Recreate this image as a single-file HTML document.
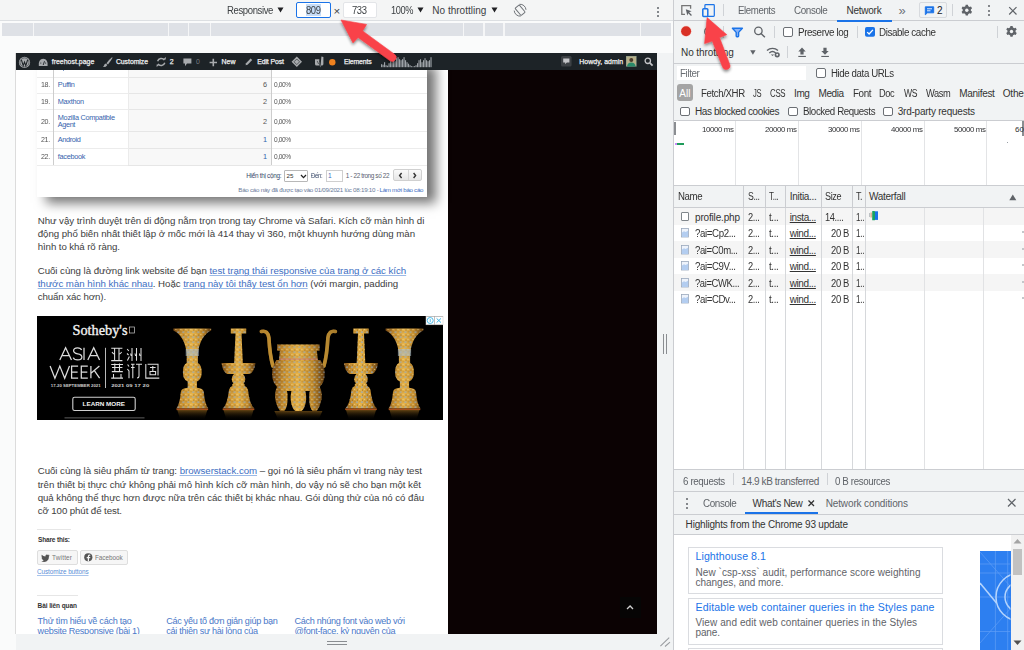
<!DOCTYPE html><html><head><meta charset="utf-8"><style>
*{margin:0;padding:0;box-sizing:border-box}
html,body{width:1024px;height:650px;overflow:hidden;background:#fff;font-family:"Liberation Sans",sans-serif}
.a{position:absolute}
.t{position:absolute;white-space:nowrap;line-height:1}
.sep{position:absolute;width:1px;background:#cfd2d6}
.cb{position:absolute;width:10px;height:10px;border:1.2px solid #6b6f74;border-radius:2px;background:#fff}
svg{position:absolute;overflow:visible}
</style></head><body>
<div class="a" style="left:0px;top:0px;width:673px;height:650px;background:#fafbfb"></div>
<div class="a" style="left:0px;top:0px;width:673px;height:20px;background:#f4f5f5"></div>
<div class="a" style="left:0px;top:20px;width:673px;height:1px;background:#dcdfe2"></div>
<svg style="left:277px;top:7px;" width="7" height="6" viewBox="0 0 7 6"><path d="M0.5 0.5H6.5L3.5 5.5Z" fill="#202124"/></svg>
<div class="a" style="left:296px;top:2px;width:35px;height:16px;background:#fff;border:1px solid #1a73e8;border-radius:2px"></div>
<div class="a" style="left:305.5px;top:4px;width:15.5px;height:12px;background:#c6dcf7"></div>
<div class="a" style="left:343px;top:2px;width:34px;height:16px;background:#fff;border:1px solid #e3e5e8;border-radius:2px"></div>
<svg style="left:416.5px;top:7px;" width="7" height="6" viewBox="0 0 7 6"><path d="M0.5 0.5H6.5L3.5 5.5Z" fill="#202124"/></svg>
<svg style="left:490.5px;top:7px;" width="7" height="6" viewBox="0 0 7 6"><path d="M0.5 0.5H6.5L3.5 5.5Z" fill="#202124"/></svg>
<svg style="left:510px;top:0px;" width="20" height="20" viewBox="0 0 20 20"><g transform="translate(10.1,10.2)" fill="none" stroke="#6f7378" stroke-width="1"><rect x="-2.7" y="-4.7" width="5.4" height="9.4" rx="0.7" transform="rotate(-40)"/><path d="M-0.6 -5.9A5.9 5.9 0 0 1 5.9 -0.4"/><path d="M0.6 5.9A5.9 5.9 0 0 1 -5.9 0.4"/></g></svg>
<div class="a" style="left:657px;top:6.5px;width:2.2px;height:2.2px;background:#5f6368;border-radius:50%"></div>
<div class="a" style="left:657px;top:10.5px;width:2.2px;height:2.2px;background:#5f6368;border-radius:50%"></div>
<div class="a" style="left:657px;top:14.5px;width:2.2px;height:2.2px;background:#5f6368;border-radius:50%"></div>
<div class="a" style="left:2px;top:23px;width:669px;height:13px;background:#dee1e6"></div>
<div class="a" style="left:32.6px;top:23px;width:1.2px;height:13px;background:#f5f6f7"></div>
<div class="a" style="left:168px;top:23px;width:1.2px;height:13px;background:#f5f6f7"></div>
<div class="a" style="left:188px;top:23px;width:1.2px;height:13px;background:#f5f6f7"></div>
<div class="a" style="left:210px;top:23px;width:1.2px;height:13px;background:#f5f6f7"></div>
<div class="a" style="left:462.6px;top:23px;width:1.2px;height:13px;background:#f5f6f7"></div>
<div class="a" style="left:483.4px;top:23px;width:1.2px;height:13px;background:#f5f6f7"></div>
<div class="a" style="left:503.4px;top:23px;width:1.2px;height:13px;background:#f5f6f7"></div>
<div class="a" style="left:640.3px;top:23px;width:1.2px;height:13px;background:#f5f6f7"></div>
<div class="t" style="left:226.70px;top:6.23px;font-size:10px;color:#3c4043;letter-spacing:-0.400px;transform:scaleX(0.954);transform-origin:0 0;">Responsive</div>
<div class="t" style="left:306.00px;top:6.23px;font-size:10px;color:#3c4043;letter-spacing:-0.400px;transform:scaleX(0.944);transform-origin:0 0;">809</div>
<div class="t" style="left:333.40px;top:6.47px;font-size:11.5px;color:#3c4043;">×</div>
<div class="t" style="left:351.60px;top:6.23px;font-size:10px;color:#3c4043;letter-spacing:-0.400px;transform:scaleX(0.944);transform-origin:0 0;">733</div>
<div class="t" style="left:390.70px;top:6.23px;font-size:10px;color:#3c4043;letter-spacing:-0.400px;transform:scaleX(0.919);transform-origin:0 0;">100%</div>
<div class="t" style="left:432.30px;top:6.23px;font-size:10px;color:#3c4043;letter-spacing:0.015px;">No throttling</div>
<div class="a" style="left:15px;top:53px;width:1px;height:581px;background:#dcdcdc"></div>
<div class="a" style="left:16px;top:53px;width:641px;height:581px;background:#ffffff"></div>
<div class="a" style="left:448px;top:70px;width:209px;height:564px;background:#0b0203"></div>
<div class="a" style="left:37px;top:60px;width:390px;height:137px;background:#fff;box-shadow:9px 6px 11px rgba(0,0,0,0.55)"></div>
<div class="a" style="left:428px;top:60px;width:20px;height:150px;background:transparent"></div>
<div class="a" style="left:37px;top:76.5px;width:390px;height:1px;background:#ececec"></div>
<div class="a" style="left:37px;top:93.2px;width:390px;height:1px;background:#ececec"></div>
<div class="a" style="left:37px;top:109.4px;width:390px;height:1px;background:#ececec"></div>
<div class="a" style="left:37px;top:131.4px;width:390px;height:1px;background:#ececec"></div>
<div class="a" style="left:37px;top:148px;width:390px;height:1px;background:#ececec"></div>
<div class="a" style="left:37px;top:164.7px;width:390px;height:1px;background:#ececec"></div>
<div class="a" style="left:128px;top:70px;width:143px;height:95px;background:#f8f8f8"></div>
<div class="a" style="left:128px;top:76.5px;width:143px;height:1px;background:#e6e6e6"></div>
<div class="a" style="left:128px;top:93.2px;width:143px;height:1px;background:#e6e6e6"></div>
<div class="a" style="left:128px;top:109.4px;width:143px;height:1px;background:#e6e6e6"></div>
<div class="a" style="left:128px;top:131.4px;width:143px;height:1px;background:#e6e6e6"></div>
<div class="a" style="left:128px;top:148px;width:143px;height:1px;background:#e6e6e6"></div>
<div class="a" style="left:128px;top:164.7px;width:143px;height:1px;background:#e6e6e6"></div>
<div class="a" style="left:53.3px;top:70px;width:1px;height:95px;background:#cdcdcd"></div>
<div class="a" style="left:127.8px;top:70px;width:1px;height:95px;background:#ebebeb"></div>
<div class="a" style="left:271px;top:70px;width:1px;height:95px;background:#cdcdcd"></div>
<div class="a" style="left:284px;top:169.5px;width:24.4px;height:12.1px;background:#fff;border:1px solid #b8b8b8;border-radius:1px"></div>
<svg style="left:300px;top:173.5px;" width="7" height="5" viewBox="0 0 7 5"><path d="M1 1L3.5 3.6L6 1" fill="none" stroke="#222" stroke-width="1.3"/></svg>
<div class="a" style="left:325.5px;top:169.5px;width:17.5px;height:12.1px;background:#fff;border:1px solid #cfcfcf"></div>
<div class="a" style="left:393.2px;top:169px;width:28.5px;height:11.5px;background:linear-gradient(#fafafa,#e6e6e6);border:1px solid #d0d0d0;border-radius:2px"></div>
<div class="a" style="left:407.5px;top:169.5px;width:1px;height:10.5px;background:#d6d6d6"></div>
<svg style="left:398px;top:171.5px;" width="20" height="7" viewBox="0 0 20 7"><path d="M3.6 1L1.6 3.5L3.6 6M15.6 1L17.6 3.5L15.6 6" fill="none" stroke="#333" stroke-width="1.4"/></svg>
<div class="t" style="left:40.50px;top:63.32px;font-size:7.3px;color:#555555;letter-spacing:-0.400px;transform:scaleX(0.974);transform-origin:0 0;">17.</div>
<div class="t" style="left:57.80px;top:63.32px;font-size:7.3px;color:#3563ad;letter-spacing:-0.400px;transform:scaleX(0.921);transform-origin:0 0;">Opera</div>
<div class="t" style="left:263.00px;top:63.32px;font-size:7.3px;color:#555555;">3</div>
<div class="t" style="left:273.70px;top:63.32px;font-size:7.3px;color:#555555;letter-spacing:-0.400px;transform:scaleX(0.901);transform-origin:0 0;">0,00%</div>
<div class="t" style="left:40.50px;top:81.32px;font-size:7.3px;color:#555555;letter-spacing:-0.400px;transform:scaleX(0.974);transform-origin:0 0;">18.</div>
<div class="t" style="left:57.80px;top:81.32px;font-size:7.3px;color:#3563ad;letter-spacing:-0.285px;">Puffin</div>
<div class="t" style="left:263.00px;top:81.32px;font-size:7.3px;color:#555555;">6</div>
<div class="t" style="left:273.70px;top:81.32px;font-size:7.3px;color:#555555;letter-spacing:-0.400px;transform:scaleX(0.901);transform-origin:0 0;">0,00%</div>
<div class="t" style="left:40.50px;top:97.82px;font-size:7.3px;color:#555555;letter-spacing:-0.400px;transform:scaleX(0.974);transform-origin:0 0;">19.</div>
<div class="t" style="left:57.80px;top:97.82px;font-size:7.3px;color:#3563ad;letter-spacing:-0.298px;">Maxthon</div>
<div class="t" style="left:263.00px;top:97.82px;font-size:7.3px;color:#555555;">2</div>
<div class="t" style="left:273.70px;top:97.82px;font-size:7.3px;color:#555555;letter-spacing:-0.400px;transform:scaleX(0.901);transform-origin:0 0;">0,00%</div>
<div class="t" style="left:40.50px;top:136.42px;font-size:7.3px;color:#555555;letter-spacing:-0.400px;transform:scaleX(0.974);transform-origin:0 0;">21.</div>
<div class="t" style="left:57.80px;top:136.42px;font-size:7.3px;color:#3563ad;letter-spacing:-0.375px;">Android</div>
<div class="t" style="left:263.00px;top:136.42px;font-size:7.3px;color:#3563ad;">1</div>
<div class="t" style="left:273.70px;top:136.42px;font-size:7.3px;color:#555555;letter-spacing:-0.400px;transform:scaleX(0.901);transform-origin:0 0;">0,00%</div>
<div class="t" style="left:40.50px;top:153.02px;font-size:7.3px;color:#555555;letter-spacing:-0.400px;transform:scaleX(0.974);transform-origin:0 0;">22.</div>
<div class="t" style="left:57.80px;top:153.02px;font-size:7.3px;color:#3563ad;letter-spacing:-0.288px;">facebook</div>
<div class="t" style="left:263.00px;top:153.02px;font-size:7.3px;color:#3563ad;">1</div>
<div class="t" style="left:273.70px;top:153.02px;font-size:7.3px;color:#555555;letter-spacing:-0.400px;transform:scaleX(0.901);transform-origin:0 0;">0,00%</div>
<div class="t" style="left:40.50px;top:117.82px;font-size:7.3px;color:#555555;letter-spacing:-0.400px;transform:scaleX(0.974);transform-origin:0 0;">20.</div>
<div class="t" style="left:57.80px;top:114.12px;font-size:7.3px;color:#3563ad;letter-spacing:-0.261px;">Mozilla Compatible</div>
<div class="t" style="left:57.80px;top:121.22px;font-size:7.3px;color:#3563ad;letter-spacing:-0.367px;">Agent</div>
<div class="t" style="left:263.00px;top:117.82px;font-size:7.3px;color:#555555;">2</div>
<div class="t" style="left:273.70px;top:117.82px;font-size:7.3px;color:#555555;letter-spacing:-0.400px;transform:scaleX(0.901);transform-origin:0 0;">0,00%</div>
<div class="t" style="left:246.30px;top:172.58px;font-size:6.4px;color:#3a4a6a;letter-spacing:-0.298px;">Hiển thị cộng:</div>
<div class="t" style="left:286.50px;top:172.95px;font-size:6.2px;color:#333;">25</div>
<div class="t" style="left:311.40px;top:172.58px;font-size:6.4px;color:#3a4a6a;letter-spacing:-0.400px;transform:scaleX(0.943);transform-origin:0 0;">Đến:</div>
<div class="t" style="left:328.00px;top:172.61px;font-size:6.6px;color:#3d6ec2;">1</div>
<div class="t" style="left:345.80px;top:172.58px;font-size:6.4px;color:#5a6270;letter-spacing:-0.376px;">1 - 22 trong số 22</div>
<div class="t" style="left:238.30px;top:186.55px;font-size:6.2px;color:#6a7a9a;letter-spacing:-0.249px;">Báo cáo này đã được tạo vào 01/09/2021 lúc 08:19:10 -</div>
<div class="t" style="left:379.50px;top:186.55px;font-size:6.2px;color:#3d6ec2;letter-spacing:-0.291px;">Làm mới báo cáo</div>
<div class="t" style="left:37.70px;top:216.39px;font-size:9.7px;color:#404040;letter-spacing:-0.042px;">Như vậy trình duyệt trên di động nằm trọn trong tay Chrome và Safari. Kích cỡ màn hình di</div>
<div class="t" style="left:37.70px;top:229.39px;font-size:9.7px;color:#404040;letter-spacing:-0.043px;">động phổ biến nhất thiết lập ở mốc mới là 414 thay vì 360, một khuynh hướng dùng màn</div>
<div class="t" style="left:37.70px;top:242.19px;font-size:9.7px;color:#404040;letter-spacing:-0.090px;">hình to khá rõ ràng.</div>
<div class="t" style="left:37.70px;top:266.39px;font-size:9.7px;color:#404040;letter-spacing:-0.040px;">Cuối cùng là đường link website để bạn <span style="color:#3d6ec2;text-decoration:underline;text-decoration-color:#9bb9e6;text-underline-offset:1px">test trạng thái responsive của trang ở các kích</span></div>
<div class="t" style="left:37.70px;top:279.49px;font-size:9.7px;color:#404040;letter-spacing:-0.047px;"><span style="color:#3d6ec2;text-decoration:underline;text-decoration-color:#9bb9e6;text-underline-offset:1px">thước màn hình khác nhau</span>. Hoặc <span style="color:#3d6ec2;text-decoration:underline;text-decoration-color:#9bb9e6;text-underline-offset:1px">trang này tôi thấy test ổn hơn</span> (với margin, padding</div>
<div class="t" style="left:37.70px;top:292.39px;font-size:9.7px;color:#404040;letter-spacing:-0.100px;">chuẩn xác hơn).</div>
<div class="t" style="left:37.70px;top:466.49px;font-size:9.7px;color:#404040;letter-spacing:-0.040px;">Cuối cùng là siêu phẩm từ trang: <span style="color:#3d6ec2;text-decoration:underline;text-decoration-color:#9bb9e6;text-underline-offset:1px">browserstack.com</span> – gọi nó là siêu phẩm vì trang này test</div>
<div class="t" style="left:37.70px;top:479.59px;font-size:9.7px;color:#404040;letter-spacing:-0.038px;">trên thiết bị thực chứ không phải mô hình kích cỡ màn hình, do vậy nó sẽ cho bạn một kết</div>
<div class="t" style="left:37.70px;top:492.89px;font-size:9.7px;color:#404040;letter-spacing:-0.045px;">quả không thể thực hơn được nữa trên các thiết bị khác nhau. Gói dùng thử của nó có đâu</div>
<div class="t" style="left:37.70px;top:505.99px;font-size:9.7px;color:#404040;letter-spacing:-0.093px;">cỡ 100 phút để test.</div>
<div class="a" style="left:37px;top:529px;width:33.5px;height:1px;background:#e6e6e6"></div>
<div class="a" style="left:37px;top:550.2px;width:40.7px;height:14.4px;background:#f6f6f6;border:1px solid #dedede;border-radius:2px"></div>
<svg style="left:41px;top:553.5px;" width="9" height="8" viewBox="0 0 9 8"><path d="M8.6 1.2Q8 1.6 7.6 1.6Q8 1.2 8.2 0.6Q7.6 1 7.1 1Q6.5 0.4 5.7 0.5Q4.2 0.8 4.4 2.6Q2.3 2.5 0.7 0.8Q0 2.4 1.2 3.6Q0.8 3.6 0.5 3.4Q0.6 4.8 1.9 5.2Q1.5 5.4 1.1 5.3Q1.6 6.4 2.8 6.5Q1.6 7.4 0.2 7.3Q4.5 9.4 7.2 5.8Q8 4.4 7.9 2.4Q8.4 2 8.6 1.2Z" fill="#555"/></svg>
<div class="a" style="left:80px;top:550.2px;width:47.7px;height:14.4px;background:#f6f6f6;border:1px solid #dedede;border-radius:2px"></div>
<svg style="left:83.5px;top:553px;" width="9" height="9" viewBox="0 0 9 9"><circle cx="4.3" cy="4.3" r="4.1" fill="#555"/><path d="M5 8.4V5.3H6.1L6.3 4.1H5V3.3Q5 2.8 5.6 2.8H6.3V1.7Q5.8 1.6 5.3 1.6Q3.8 1.7 3.8 3.2V4.1H2.7V5.3H3.8V8.4Z" fill="#f6f6f6"/></svg>
<div class="a" style="left:37px;top:594.5px;width:40.6px;height:1.5px;background:#e6e6e6"></div>
<div class="t" style="left:38.00px;top:536.60px;font-size:6.5px;color:#333;font-weight:bold;letter-spacing:-0.159px;">Share this:</div>
<div class="t" style="left:52.00px;top:554.78px;font-size:6.4px;color:#777;letter-spacing:0.197px;">Twitter</div>
<div class="t" style="left:94.90px;top:554.78px;font-size:6.4px;color:#777;letter-spacing:-0.024px;">Facebook</div>
<div class="t" style="left:37.00px;top:569.08px;font-size:6.4px;color:#5b8fd6;letter-spacing:-0.083px;text-decoration:underline;text-decoration-color:#a8c4ec">Customize buttons</div>
<div class="t" style="left:37.60px;top:603.10px;font-size:6.5px;color:#333;font-weight:bold;letter-spacing:-0.096px;">Bài liên quan</div>
<div class="t" style="left:37.60px;top:617.00px;font-size:9.1px;color:#4a78c8;letter-spacing:-0.279px;">Thử tìm hiểu về cách tạo</div>
<div class="t" style="left:37.60px;top:626.80px;font-size:9.1px;color:#4a78c8;letter-spacing:-0.275px;">website Responsive (bài 1)</div>
<div class="t" style="left:166.20px;top:617.00px;font-size:9.1px;color:#4a78c8;letter-spacing:-0.282px;">Các yếu tố đơn giản giúp bạn</div>
<div class="t" style="left:166.20px;top:626.80px;font-size:9.1px;color:#4a78c8;letter-spacing:-0.283px;">cải thiện sự hài lòng của</div>
<div class="t" style="left:294.50px;top:617.00px;font-size:9.1px;color:#4a78c8;letter-spacing:-0.296px;">Cách nhúng font vào web với</div>
<div class="t" style="left:294.50px;top:626.80px;font-size:9.1px;color:#4a78c8;letter-spacing:-0.301px;">@font-face, kỷ nguyên của</div>
<div class="a" style="left:620.2px;top:597.3px;width:20.6px;height:20.3px;background:#060505"></div>
<svg style="left:620.2px;top:597.3px;" width="20.6" height="20.3" viewBox="0 0 20.6 20.3"><path d="M7 12L10.1 9L13 12" fill="none" stroke="#cfcfcf" stroke-width="1.3"/></svg>
<svg style="left:37px;top:316px;" width="406" height="104" viewBox="0 0 406 104">
<defs>
<linearGradient id="gold" x1="0" y1="0" x2="1" y2="0">
<stop offset="0" stop-color="#7a4a14"/><stop offset="0.22" stop-color="#c99233"/><stop offset="0.5" stop-color="#e6b34a"/><stop offset="0.78" stop-color="#c08a2e"/><stop offset="1" stop-color="#5e3a10"/></linearGradient>
<linearGradient id="refl" x1="0" y1="0" x2="0" y2="1"><stop offset="0" stop-color="#7a5418" stop-opacity="0.75"/><stop offset="1" stop-color="#000" stop-opacity="0"/></linearGradient>
<pattern id="tex" width="5" height="5" patternUnits="userSpaceOnUse">
<circle cx="1" cy="1.2" r="0.85" fill="#86a9d0" opacity="0.75"/><circle cx="3.6" cy="3.4" r="0.7" fill="#f3dc9a" opacity="0.6"/><circle cx="1.4" cy="4" r="0.55" fill="#3a2208" opacity="0.6"/><circle cx="4" cy="0.8" r="0.5" fill="#4a2c0a" opacity="0.5"/>
</pattern>
</defs>
<rect x="0" y="0" width="406" height="104" fill="#000"/>
<g transform="translate(155.3,0)"><path d="M-18.9 12.5H18.9V14.5Q7.5 20 5.6 37.8V47Q9.4 49 9.4 56.2Q9.4 63.5 4.6 65.5V71.7Q11 72 11.5 76Q12.5 88 16 92.5H-16Q-12.5 88 -11.5 76Q-11 72 -4.6 71.7V65.5Q-9.4 63.5 -9.4 56.2Q-9.4 49 -5.6 47V37.8Q-7.5 20 -18.9 14.5Z" fill="url(#gold)"/><path d="M-18.9 12.5H18.9V14.5Q7.5 20 5.6 37.8V47Q9.4 49 9.4 56.2Q9.4 63.5 4.6 65.5V71.7Q11 72 11.5 76Q12.5 88 16 92.5H-16Q-12.5 88 -11.5 76Q-11 72 -4.6 71.7V65.5Q-9.4 63.5 -9.4 56.2Q-9.4 49 -5.6 47V37.8Q-7.5 20 -18.9 14.5Z" fill="url(#tex)"/>
<rect x="-6.6" y="33" width="13.2" height="7" fill="#a8bccc" opacity="0.6"/>
<rect x="-15.8" y="92.5" width="31.6" height="1.6" fill="#a8501c"/>
<path d="M-15 94.1H15L12 104H-12Z" fill="url(#refl)"/></g>
<g transform="translate(201.5,0)"><path d="M-7.7 12.5H7.7V17.6H3L4.3 47H17Q16 56 11 58H4.5Q6.8 60 6.8 63Q6.8 66 5 67Q6.8 68.5 6.2 70Q8.5 70.5 9.5 74Q11 88 15.8 92.5H-15.8Q-11 88 -9.5 74Q-8.5 70.5 -6.2 70Q-6.8 68.5 -5 67Q-6.8 66 -6.8 63Q-6.8 60 -4.5 58H-11Q-16 56 -17 47H-4.3L-3 17.6H-7.7Z" fill="url(#gold)"/><path d="M-7.7 12.5H7.7V17.6H3L4.3 47H17Q16 56 11 58H4.5Q6.8 60 6.8 63Q6.8 66 5 67Q6.8 68.5 6.2 70Q8.5 70.5 9.5 74Q11 88 15.8 92.5H-15.8Q-11 88 -9.5 74Q-8.5 70.5 -6.2 70Q-6.8 68.5 -5 67Q-6.8 66 -6.8 63Q-6.8 60 -4.5 58H-11Q-16 56 -17 47H-4.3L-3 17.6H-7.7Z" fill="url(#tex)"/>
<rect x="-15.8" y="92.5" width="31.6" height="1.6" fill="#a8501c"/>
<path d="M-15 94.1H15L12 104H-12Z" fill="url(#refl)"/></g>
<g transform="translate(261.4,0)">
<path d="M-37 15.5Q-30.5 14 -29.5 22Q-28.5 40 -25.5 50M37 15.5Q30.5 14 29.5 22Q28.5 40 25.5 50" fill="none" stroke="url(#gold)" stroke-width="3.6" stroke-linecap="round"/>
<path d="M-37 15.5Q-30.5 14 -29.5 22Q-28.5 40 -25.5 50M37 15.5Q30.5 14 29.5 22Q28.5 40 25.5 50" fill="none" stroke="#c89838" stroke-width="3.6" stroke-linecap="round" opacity="0.7"/>
<path d="M-21.2 28.6H21.2V34.8H18.5L19.5 44H22Q27.5 52 26 62Q24 73 12 75H-12Q-24 73 -26 62Q-27.5 52 -22 44H-19.5L-18.5 34.8H-21.2Z M-21 70H-12.5Q-10 78 -11 86Q-11.5 92 -14 94.8H-18.5Q-21 92 -22.5 86Q-25 78 -21 70Z M-6 72H6Q9 80 7 88Q5.5 93.5 3 95H-3Q-5.5 93.5 -7 88Q-9 80 -6 72Z M12.5 70H21Q25 78 22.5 86Q21 92 18.5 94.8H14Q11.5 92 11 86Q10 78 12.5 70Z" fill="url(#gold)"/><path d="M-21.2 28.6H21.2V34.8H18.5L19.5 44H22Q27.5 52 26 62Q24 73 12 75H-12Q-24 73 -26 62Q-27.5 52 -22 44H-19.5L-18.5 34.8H-21.2Z M-21 70H-12.5Q-10 78 -11 86Q-11.5 92 -14 94.8H-18.5Q-21 92 -22.5 86Q-25 78 -21 70Z M-6 72H6Q9 80 7 88Q5.5 93.5 3 95H-3Q-5.5 93.5 -7 88Q-9 80 -6 72Z M12.5 70H21Q25 78 22.5 86Q21 92 18.5 94.8H14Q11.5 92 11 86Q10 78 12.5 70Z" fill="url(#tex)"/>
<rect x="-19" y="42.5" width="38" height="1.2" fill="#c07080" opacity="0.7"/>
<path d="M-24 95H24L20 104H-20Z" fill="url(#refl)"/>
</g>
<g transform="translate(324,0)"><path d="M-7.7 12.5H7.7V17.6H3L4.3 47H17Q16 56 11 58H4.5Q6.8 60 6.8 63Q6.8 66 5 67Q6.8 68.5 6.2 70Q8.5 70.5 9.5 74Q11 88 15.8 92.5H-15.8Q-11 88 -9.5 74Q-8.5 70.5 -6.2 70Q-6.8 68.5 -5 67Q-6.8 66 -6.8 63Q-6.8 60 -4.5 58H-11Q-16 56 -17 47H-4.3L-3 17.6H-7.7Z" fill="url(#gold)"/><path d="M-7.7 12.5H7.7V17.6H3L4.3 47H17Q16 56 11 58H4.5Q6.8 60 6.8 63Q6.8 66 5 67Q6.8 68.5 6.2 70Q8.5 70.5 9.5 74Q11 88 15.8 92.5H-15.8Q-11 88 -9.5 74Q-8.5 70.5 -6.2 70Q-6.8 68.5 -5 67Q-6.8 66 -6.8 63Q-6.8 60 -4.5 58H-11Q-16 56 -17 47H-4.3L-3 17.6H-7.7Z" fill="url(#tex)"/>
<rect x="-15.8" y="92.5" width="31.6" height="1.6" fill="#a8501c"/>
<path d="M-15 94.1H15L12 104H-12Z" fill="url(#refl)"/></g>
<g transform="translate(367.5,0)"><path d="M-18.9 12.5H18.9V14.5Q7.5 20 5.6 37.8V47Q9.4 49 9.4 56.2Q9.4 63.5 4.6 65.5V71.7Q11 72 11.5 76Q12.5 88 16 92.5H-16Q-12.5 88 -11.5 76Q-11 72 -4.6 71.7V65.5Q-9.4 63.5 -9.4 56.2Q-9.4 49 -5.6 47V37.8Q-7.5 20 -18.9 14.5Z" fill="url(#gold)"/><path d="M-18.9 12.5H18.9V14.5Q7.5 20 5.6 37.8V47Q9.4 49 9.4 56.2Q9.4 63.5 4.6 65.5V71.7Q11 72 11.5 76Q12.5 88 16 92.5H-16Q-12.5 88 -11.5 76Q-11 72 -4.6 71.7V65.5Q-9.4 63.5 -9.4 56.2Q-9.4 49 -5.6 47V37.8Q-7.5 20 -18.9 14.5Z" fill="url(#tex)"/>
<rect x="-6.6" y="33" width="13.2" height="7" fill="#a8bccc" opacity="0.6"/>
<rect x="-15.8" y="92.5" width="31.6" height="1.6" fill="#a8501c"/>
<path d="M-15 94.1H15L12 104H-12Z" fill="url(#refl)"/></g>
<text x="35.5" y="19" font-family="Liberation Serif" font-size="14.5" fill="#f2f2f2" stroke="#f2f2f2" stroke-width="0.35" textLength="55" lengthAdjust="spacingAndGlyphs">Sotheby's</text>
<rect x="92.5" y="11" width="5" height="6" fill="none" stroke="#ccc" stroke-width="0.7"/>
<g fill="none" stroke="#dcdcdc" stroke-width="1.25" stroke-linejoin="miter">
<path d="M22.8 43.9L28.6 31.8L34.5 43.9M24.8 39.6H32.4"/>
<path d="M44.6 34Q43.8 31.8 40.6 31.8Q36.6 31.8 36.6 34.8Q36.6 37.2 40.6 37.8Q44.9 38.4 44.9 41Q44.9 43.9 40.6 43.9Q37 43.9 36.3 41.6"/>
<path d="M47 31.8V43.9"/>
<path d="M50.8 43.9L56.7 31.8L62.6 43.9M52.8 39.6H60.6"/>
<path d="M13.1 50.1L17.9 62.2L22.8 50.1L27.7 62.2L32.5 50.1"/>
<path d="M41.1 50.1H34.6V62.2H41.1M34.6 56H40.6"/>
<path d="M50.8 50.1H44.3V62.2H50.8M44.3 56H50.3"/>
<path d="M53.9 50.1V62.2M62.4 50.1L54 57.2M57.2 54.4L62.6 62.2"/>
</g>
<rect x="68" y="31.8" width="0.9" height="40.2" fill="#cfcfcf"/>
<g stroke="#dedede" stroke-width="1.05" fill="none">
<path d="M74.2 32.2H85.4M74.2 44.6H85.4M77.6 32.2V44.6M82 32.2V44.6M75 36Q76.5 38.5 77.6 38M84.6 36Q83 38.5 82 38"/>
<path d="M90.2 33L91.8 35M90 37.5L91.6 39M90.4 44.6L92.4 40.5M95 32V45M99.5 32V44.8M104 32V45M93.6 37.5L94.2 40M98 37.5L98.6 40M102.4 37.5L103 40"/>
<path d="M74.2 48.5H86M75 51.5H85.4M77.8 47.5V55M82.5 47.5V55M74.8 55.6H85.8M76.5 58V62M84 58V62M74.2 62.1H86"/>
<path d="M90.6 48.5L92 50.5M90.4 53L92 55V62.3M94 48.2H97.6M94 51.5H97.6M95.8 48V62.3M99 48.2H105M102 48V60Q102 62 100 62"/>
<path d="M108.8 48V62.1H122.3M110.6 48.2H121V59.5M113 51.5H118.6M115.8 50V55.5M113 55.5H118.6V58.8H113Z"/>
</g>
<text x="13.8" y="71.1" font-family="Liberation Sans" font-weight="bold" font-size="3.8" fill="#cfcfcf" textLength="49.8" lengthAdjust="spacingAndGlyphs">17-20 SEPTEMBER 2021</text>
<text x="74.2" y="71.1" font-family="Liberation Sans" font-weight="bold" font-size="3.8" fill="#cfcfcf" textLength="38" lengthAdjust="spacingAndGlyphs">2021 09 17 20</text>
<rect x="35.8" y="81.2" width="62.4" height="13.3" rx="1.8" fill="none" stroke="#d0d0d0" stroke-width="1.1"/>
<text x="45.6" y="89.9" font-family="Liberation Sans" font-weight="bold" font-size="5.8" fill="#f4f4f4" textLength="42.4" lengthAdjust="spacingAndGlyphs">LEARN MORE</text>
<rect x="27.5" y="101" width="80" height="1.6" fill="#3a3a3a"/>
<rect x="389" y="0.3" width="8.5" height="8.5" fill="#fff"/>
<rect x="397.5" y="0.3" width="8.5" height="8.5" fill="#fff"/>
<rect x="389" y="0.3" width="17" height="8.5" fill="none" stroke="#ccc" stroke-width="0.5"/>
<circle cx="393.2" cy="4.5" r="3" fill="none" stroke="#3cb4e6" stroke-width="0.9"/>
<rect x="392.8" y="3" width="0.8" height="3" fill="#3cb4e6"/>
<path d="M399.6 2.4L404 6.6M404 2.4L399.6 6.6" stroke="#3cb4e6" stroke-width="1"/>
</svg>
<div class="a" style="left:16px;top:53px;width:641px;height:17px;background:#1d2327"></div>
<svg style="left:18px;top:56px;" width="14" height="13" viewBox="0 0 14 13"><circle cx="6.5" cy="6.4" r="5.6" fill="#a7aaad"/><circle cx="6.5" cy="6.4" r="4.5" fill="none" stroke="#1d2327" stroke-width="0.5"/><path d="M3.4 3.8L5.2 9.6L6.5 6L7.8 9.6L9.6 3.8" fill="none" stroke="#1d2327" stroke-width="1.1"/></svg>
<svg style="left:38px;top:57.5px;" width="11" height="9" viewBox="0 0 11 9"><path d="M0.8 8Q0.2 1 5.2 0.8Q10.2 1 9.6 8Z" fill="#a7aaad"/><path d="M5.2 7L6.5 3.2" stroke="#1d2327" stroke-width="0.9"/><circle cx="2.8" cy="5" r="0.6" fill="#1d2327"/><circle cx="7.6" cy="5" r="0.6" fill="#1d2327"/></svg>
<svg style="left:102px;top:56px;" width="11" height="12" viewBox="0 0 11 12"><path d="M10 1.2Q7 3.5 4.5 7.2L6 8.4Q8.8 5 10.6 1.8Z" fill="#a7aaad"/><path d="M4.2 7.6Q2.4 7.6 2 9.4Q1.6 10.6 0.8 11Q3.8 11.4 5.2 9.2Z" fill="#a7aaad"/></svg>
<svg style="left:156px;top:57px;" width="11" height="10" viewBox="0 0 11 10"><path d="M1.6 4.2A3.8 3.8 0 0 1 8.4 3.2" fill="none" stroke="#a7aaad" stroke-width="1.5"/><path d="M8.8 5.8A3.8 3.8 0 0 1 2 6.8" fill="none" stroke="#a7aaad" stroke-width="1.5"/><path d="M6.8 2.4H9.8V0Z" fill="#a7aaad"/><path d="M3.6 7.6H0.6V10Z" fill="#a7aaad"/></svg>
<svg style="left:182.5px;top:58px;" width="9" height="9" viewBox="0 0 9 9"><path d="M0.4 0.6H8.4V5.6H4L2 8.2V5.6H0.4Z" fill="#a7aaad"/></svg>
<svg style="left:208.5px;top:57.5px;" width="9" height="9" viewBox="0 0 9 9"><path d="M4.3 0.8V8.2M0.6 4.5H8" stroke="#a7aaad" stroke-width="1.6"/></svg>
<svg style="left:244px;top:57px;" width="9" height="10" viewBox="0 0 9 10"><path d="M1.6 8.2L2 6.2L6.6 1.4L8.2 3L3.6 7.8Z" fill="#a7aaad"/></svg>
<svg style="left:291px;top:56px;" width="12" height="12" viewBox="0 0 12 12"><path d="M5.8 0.5L11 5.8L5.8 11L0.6 5.8Z" fill="#a7aaad"/><path d="M5.8 3L8.6 5.8L5.8 8.6L3 5.8Z" fill="none" stroke="#1d2327" stroke-width="0.6"/></svg>
<svg style="left:313.5px;top:56px;" width="10" height="12" viewBox="0 0 10 12"><path d="M1 3.2H5.4V9.6H2.6Q1 9.6 1 8Z" fill="#a7aaad"/><path d="M7.4 0.6L9.4 1V8Q9.4 9.6 7.8 9.6H5.6L6.4 11.6Z" fill="#a7aaad"/><path d="M3.2 5L4.6 8M6.6 1.8L5.6 6" stroke="#1d2327" stroke-width="0.6"/></svg>
<svg style="left:329.3px;top:58.5px;" width="7" height="7" viewBox="0 0 7 7"><circle cx="3.3" cy="3.3" r="3.2" fill="#f0821f"/></svg>
<svg style="left:381px;top:56.8px;" width="52" height="10.2" viewBox="0 0 52 10.2"><rect x="0.00" y="7.20" width="1.1" height="3" fill="#9ea3a8"/><rect x="1.50" y="7.70" width="1.1" height="2.5" fill="#9ea3a8"/><rect x="3.00" y="5.20" width="1.1" height="5" fill="#9ea3a8"/><rect x="4.50" y="8.20" width="1.1" height="2" fill="#9ea3a8"/><rect x="6.00" y="8.70" width="1.1" height="1.5" fill="#9ea3a8"/><rect x="7.50" y="6.20" width="1.1" height="4" fill="#9ea3a8"/><rect x="9.00" y="4.20" width="1.1" height="6" fill="#9ea3a8"/><rect x="10.50" y="5.20" width="1.1" height="5" fill="#9ea3a8"/><rect x="12.00" y="3.20" width="1.1" height="7" fill="#9ea3a8"/><rect x="13.50" y="4.20" width="1.1" height="6" fill="#9ea3a8"/><rect x="15.00" y="1.20" width="1.1" height="9" fill="#9ea3a8"/><rect x="16.50" y="0.20" width="1.1" height="10" fill="#9ea3a8"/><rect x="18.00" y="2.20" width="1.1" height="8" fill="#9ea3a8"/><rect x="19.50" y="3.20" width="1.1" height="7" fill="#9ea3a8"/><rect x="21.00" y="2.20" width="1.1" height="8" fill="#9ea3a8"/><rect x="22.50" y="0.20" width="1.1" height="10" fill="#9ea3a8"/><rect x="24.00" y="3.20" width="1.1" height="7" fill="#9ea3a8"/><rect x="25.50" y="5.20" width="1.1" height="5" fill="#9ea3a8"/><rect x="27.00" y="6.70" width="1.1" height="3.5" fill="#9ea3a8"/><rect x="28.50" y="8.20" width="1.1" height="2" fill="#9ea3a8"/><rect x="30.00" y="9.20" width="1.1" height="1" fill="#9ea3a8"/><rect x="31.50" y="9.40" width="1.1" height="0.8" fill="#9ea3a8"/><rect x="33.00" y="9.20" width="1.1" height="1" fill="#9ea3a8"/><rect x="34.50" y="8.20" width="1.1" height="2" fill="#9ea3a8"/><rect x="36.00" y="6.20" width="1.1" height="4" fill="#9ea3a8"/><rect x="37.50" y="3.20" width="1.1" height="7" fill="#9ea3a8"/><rect x="39.00" y="2.20" width="1.1" height="8" fill="#9ea3a8"/><rect x="40.50" y="5.20" width="1.1" height="5" fill="#9ea3a8"/><rect x="42.00" y="3.20" width="1.1" height="7" fill="#9ea3a8"/><rect x="43.50" y="1.20" width="1.1" height="9" fill="#9ea3a8"/><rect x="45.00" y="3.20" width="1.1" height="7" fill="#9ea3a8"/><rect x="46.50" y="4.20" width="1.1" height="6" fill="#9ea3a8"/><rect x="48.00" y="3.20" width="1.1" height="7" fill="#9ea3a8"/><rect x="49.50" y="0.20" width="1.1" height="10" fill="#9ea3a8"/></svg>
<svg style="left:560.5px;top:56.4px;" width="11" height="11" viewBox="0 0 11 11"><rect x="0" y="0" width="10.6" height="10.6" rx="1.6" fill="#3c4044"/><path d="M2.2 2.6H8.4V6.6H5.8L4.2 8.2V6.6H2.2Z" fill="#c3c4c7"/></svg>
<svg style="left:626.2px;top:56.4px;" width="10.6" height="10.6" viewBox="0 0 10.6 10.6"><rect x="0" y="0" width="10.6" height="10.6" fill="#8a9a88"/><rect x="0.6" y="0.6" width="9.4" height="9.4" fill="#b7b08a"/><circle cx="5.3" cy="4" r="2" fill="#4a3a2a"/><path d="M1 10.4Q1.4 6.6 5.3 6.4Q9.2 6.6 9.6 10.4Z" fill="#2a8a6a"/></svg>
<svg style="left:643.5px;top:57px;" width="10" height="10" viewBox="0 0 10 10"><circle cx="3.8" cy="3.8" r="2.7" fill="none" stroke="#c3c4c7" stroke-width="1.3"/><path d="M5.8 5.8L8.6 8.6" stroke="#c3c4c7" stroke-width="1.8"/></svg>
<div class="t" style="left:51.70px;top:58.96px;font-size:6.9px;color:#f0f0f1;letter-spacing:0.038px;-webkit-text-stroke:0.25px #f0f0f1">freehost.page</div>
<div class="t" style="left:115.90px;top:58.96px;font-size:6.9px;color:#f0f0f1;letter-spacing:-0.044px;-webkit-text-stroke:0.25px #f0f0f1">Customize</div>
<div class="t" style="left:169.80px;top:58.96px;font-size:6.9px;color:#f0f0f1;-webkit-text-stroke:0.25px #f0f0f1">2</div>
<div class="t" style="left:196.10px;top:58.96px;font-size:6.9px;color:#787c82;">0</div>
<div class="t" style="left:221.40px;top:58.96px;font-size:6.9px;color:#f0f0f1;letter-spacing:0.158px;-webkit-text-stroke:0.25px #f0f0f1">New</div>
<div class="t" style="left:257.20px;top:58.96px;font-size:6.9px;color:#f0f0f1;letter-spacing:-0.110px;-webkit-text-stroke:0.25px #f0f0f1">Edit Post</div>
<div class="t" style="left:344.00px;top:58.96px;font-size:6.9px;color:#f0f0f1;letter-spacing:-0.160px;-webkit-text-stroke:0.25px #f0f0f1">Elements</div>
<div class="t" style="left:579.30px;top:58.96px;font-size:6.9px;color:#f0f0f1;letter-spacing:0.068px;-webkit-text-stroke:0.25px #f0f0f1">Howdy, admin</div>
<div class="a" style="left:16px;top:634px;width:657px;height:16px;background:#f1f3f4"></div>
<div class="a" style="left:657px;top:53px;width:16px;height:597px;background:#f1f3f4"></div>
<div class="a" style="left:662.5px;top:334px;width:1px;height:20px;background:#8a8d91"></div>
<div class="a" style="left:665.8px;top:334px;width:1px;height:20px;background:#8a8d91"></div>
<div class="a" style="left:327px;top:641px;width:19.5px;height:1px;background:#8a8d91"></div>
<div class="a" style="left:327px;top:644px;width:19.5px;height:1px;background:#8a8d91"></div>
<svg style="left:659px;top:636px;" width="12" height="12" viewBox="0 0 12 12"><path d="M1.4 10.2L10.2 1.7M6 10.5L11 6.2" stroke="#9a9da1" stroke-width="1.1"/></svg>
<div class="a" style="left:673px;top:0px;width:351px;height:650px;background:#f1f3f4"></div>
<div class="a" style="left:673px;top:0px;width:1px;height:650px;background:#cbcdd1"></div>
<div class="a" style="left:674px;top:20px;width:350px;height:1px;background:#cbcdd1"></div>
<svg style="left:680px;top:4px;" width="14" height="13" viewBox="0 0 14 13"><path d="M5 10.4H1.8V1.6H10.6V4.8" fill="none" stroke="#757575" stroke-width="1.3"/><path d="M5.8 5.2L11.6 7.3L9.2 8.3L11.9 11L11 11.9L8.3 9.2L7.3 11.6Z" fill="#5f6368"/></svg>
<svg style="left:701px;top:3px;" width="15" height="15" viewBox="0 0 15 15"><rect x="3.9" y="1.6" width="9.4" height="11.8" rx="0.8" fill="none" stroke="#1a73e8" stroke-width="1.2"/><rect x="1.8" y="5.8" width="5" height="7.6" rx="0.8" fill="#f1f3f4" stroke="#1a73e8" stroke-width="1.5"/></svg>
<div class="a" style="left:723px;top:4px;width:1px;height:12px;background:#cfd2d6"></div>
<div class="a" style="left:837px;top:19.5px;width:55px;height:2px;background:#1a73e8"></div>
<div class="a" style="left:919px;top:2px;width:28px;height:16px;border:1px solid #d7dade;border-radius:2px"></div>
<svg style="left:924px;top:6px;" width="11" height="10" viewBox="0 0 11 10"><path d="M1.3 0.8H9.7V6.8H3.5L1.3 8.8Z" fill="#1a73e8" stroke="#1a73e8" stroke-width="0.9" stroke-linejoin="round"/><path d="M3 2.8H8M3 4.8H6.5" stroke="#fff" stroke-width="0.9"/></svg>
<div class="a" style="left:952px;top:4px;width:1px;height:12px;background:#cfd2d6"></div>
<svg style="left:960px;top:4px;" width="14" height="14" viewBox="0 0 14 14"><path d="M6.8 6.3m-1.1 -5.6h2.2l.35 1.55a4.2 4.2 0 0 1 1.2.7l1.5-.5 1.1 1.9-1.2 1.05a4.2 4.2 0 0 1 0 1.4l1.2 1.05-1.1 1.9-1.5-.5a4.2 4.2 0 0 1-1.2.7l-.35 1.55h-2.2l-.35-1.55a4.2 4.2 0 0 1-1.2-.7l-1.5.5-1.1-1.9 1.2-1.05a4.2 4.2 0 0 1 0-1.4l-1.2-1.05 1.1-1.9 1.5.5a4.2 4.2 0 0 1 1.2-.7z" fill="#5f6368"/><circle cx="6.8" cy="6.3" r="1.7" fill="#f1f3f4"/></svg>
<div class="a" style="left:988.2px;top:4.9px;width:2.3px;height:2.3px;background:#5f6368;border-radius:50%"></div>
<div class="a" style="left:988.2px;top:9.6px;width:2.3px;height:2.3px;background:#5f6368;border-radius:50%"></div>
<div class="a" style="left:988.2px;top:14.0px;width:2.3px;height:2.3px;background:#5f6368;border-radius:50%"></div>
<svg style="left:1008px;top:6px;" width="10" height="10" viewBox="0 0 10 10"><path d="M1.2 1.2L8.5 8.5M8.5 1.2L1.2 8.5" stroke="#5f6368" stroke-width="1.2"/></svg>
<svg style="left:680px;top:25px;" width="13" height="13" viewBox="0 0 13 13"><circle cx="6.1" cy="6.2" r="5.6" fill="#f7dcd9"/><circle cx="6.1" cy="6.2" r="5" fill="#d93025"/></svg>
<svg style="left:703px;top:26px;" width="12" height="12" viewBox="0 0 12 12"><circle cx="6" cy="5.5" r="4.3" fill="none" stroke="#5f6368" stroke-width="1.2"/><path d="M3 8.5L9 2.5" stroke="#5f6368" stroke-width="1.2"/></svg>
<div class="a" style="left:723px;top:25.5px;width:1px;height:12px;background:#cfd2d6"></div>
<svg style="left:731px;top:27px;" width="14" height="11" viewBox="0 0 14 11"><path d="M1.4 1.2H11.4L7.6 5.4V9.1Q7.6 9.8 6.9 9.8H5.9Q5.2 9.8 5.2 9.1V5.4Z" fill="#8ab4f8" stroke="#1a73e8" stroke-width="1.4" stroke-linejoin="round"/></svg>
<svg style="left:753px;top:26px;" width="13" height="13" viewBox="0 0 13 13"><circle cx="5.4" cy="4.9" r="3.7" fill="none" stroke="#5f6368" stroke-width="1.3"/><path d="M8.1 7.6L11.9 11.3" stroke="#5f6368" stroke-width="1.4"/></svg>
<div class="a" style="left:774px;top:25.5px;width:1px;height:12px;background:#cfd2d6"></div>
<div class="a" style="left:783px;top:27.2px;width:10px;height:9.5px;border:1.2px solid #6b6f74;border-radius:2px;background:#fff"></div>
<div class="a" style="left:856.5px;top:25.5px;width:1px;height:12px;background:#cfd2d6"></div>
<svg style="left:864.5px;top:27px;" width="10.5" height="10" viewBox="0 0 10.5 10"><rect x="0" y="0" width="10" height="9.8" rx="1.8" fill="#1a73e8"/><path d="M2.2 5.1L4.1 7L7.9 2.9" fill="none" stroke="#fff" stroke-width="1.3"/></svg>
<div class="a" style="left:996.5px;top:25.5px;width:1px;height:12px;background:#cfd2d6"></div>
<svg style="left:1005px;top:25px;" width="14" height="14" viewBox="0 0 14 14"><path d="M6.5 6.5m-1.1 -5.6h2.2l.35 1.55a4.2 4.2 0 0 1 1.2.7l1.5-.5 1.1 1.9-1.2 1.05a4.2 4.2 0 0 1 0 1.4l1.2 1.05-1.1 1.9-1.5-.5a4.2 4.2 0 0 1-1.2.7l-.35 1.55h-2.2l-.35-1.55a4.2 4.2 0 0 1-1.2-.7l-1.5.5-1.1-1.9 1.2-1.05a4.2 4.2 0 0 1 0-1.4l-1.2-1.05 1.1-1.9 1.5.5a4.2 4.2 0 0 1 1.2-.7z" fill="#5f6368"/><circle cx="6.5" cy="6.5" r="1.7" fill="#f1f3f4"/></svg>
<svg style="left:750px;top:50px;" width="6" height="5" viewBox="0 0 6 5"><path d="M0.2 0.2H5.6L2.9 4.8Z" fill="#5f6368"/></svg>
<svg style="left:765px;top:46px;" width="17" height="12" viewBox="0 0 17 12"><path d="M2 4.6A8 8 0 0 1 13 4.6" fill="none" stroke="#5f6368" stroke-width="1.4"/><path d="M4.3 6.9A4.8 4.8 0 0 1 10.7 6.9" fill="none" stroke="#5f6368" stroke-width="1.4"/><path d="M5.8 8.4L7.5 10L9.2 8.4Z" fill="#5f6368"/><circle cx="12.2" cy="8.8" r="2.6" fill="#5f6368"/><circle cx="12.2" cy="8.8" r="1" fill="#f1f3f4"/></svg>
<div class="a" style="left:787px;top:46.3px;width:1px;height:12px;background:#cfd2d6"></div>
<svg style="left:797px;top:46px;" width="10" height="12" viewBox="0 0 10 12"><path d="M5 1.6L8.7 5.4H6.6V8.6H3.4V5.4H1.3Z" fill="#5f6368"/><rect x="1.3" y="9.9" width="7.6" height="1.1" fill="#5f6368"/></svg>
<svg style="left:819.5px;top:46px;" width="10" height="12" viewBox="0 0 10 12"><path d="M5 8.7L8.7 4.9H6.6V1.7H3.4V4.9H1.3Z" fill="#5f6368"/><rect x="1.3" y="9.9" width="7.6" height="1.1" fill="#5f6368"/></svg>
<div class="a" style="left:674px;top:62.5px;width:350px;height:1px;background:#cbcdd1"></div>
<div class="a" style="left:677px;top:66px;width:129px;height:14px;background:#fff"></div>
<div class="a" style="left:816px;top:68.4px;width:10px;height:9.6px;border:1.2px solid #6b6f74;border-radius:2px;background:#fff"></div>
<div class="a" style="left:677px;top:84px;width:16px;height:17px;background:#a4a4a4;border-radius:3px"></div>
<div class="a" style="left:680.2px;top:106.5px;width:9.6px;height:9.4px;border:1.2px solid #6b6f74;border-radius:2px;background:#fff"></div>
<div class="a" style="left:788px;top:106.5px;width:9.6px;height:9.4px;border:1.2px solid #6b6f74;border-radius:2px;background:#fff"></div>
<div class="a" style="left:883px;top:106.5px;width:9.6px;height:9.4px;border:1.2px solid #6b6f74;border-radius:2px;background:#fff"></div>
<div class="a" style="left:674px;top:120px;width:350px;height:1px;background:#cbcdd1"></div>
<div class="a" style="left:674px;top:121px;width:350px;height:64px;background:#fff"></div>
<div class="a" style="left:735px;top:121px;width:1px;height:64px;background:#e3e4e6"></div>
<div class="a" style="left:798px;top:121px;width:1px;height:64px;background:#e3e4e6"></div>
<div class="a" style="left:861px;top:121px;width:1px;height:64px;background:#e3e4e6"></div>
<div class="a" style="left:924px;top:121px;width:1px;height:64px;background:#e3e4e6"></div>
<div class="a" style="left:986px;top:121px;width:1px;height:64px;background:#e3e4e6"></div>
<div class="a" style="left:674px;top:122px;width:1.5px;height:13px;background:#8a8d91"></div>
<div class="a" style="left:676px;top:143.4px;width:7.5px;height:1.8px;background:#1e9c5a"></div>
<div class="a" style="left:675px;top:143.4px;width:2px;height:1.8px;background:#c58af9"></div>
<div class="a" style="left:1022px;top:121px;width:2px;height:15px;background:#8a8d91"></div>
<div class="a" style="left:1007.3px;top:141.8px;width:1px;height:1px;background:#9aa0a6"></div>
<div class="a" style="left:674px;top:184.5px;width:350px;height:1px;background:#cbcdd1"></div>
<div class="a" style="left:674px;top:185.5px;width:350px;height:21.5px;background:#f1f3f4"></div>
<div class="a" style="left:674px;top:207px;width:350px;height:1px;background:#cbcdd1"></div>
<div class="a" style="left:743px;top:185.5px;width:1px;height:284px;background:#cbcdd1"></div>
<div class="a" style="left:765px;top:185.5px;width:1px;height:284px;background:#cbcdd1"></div>
<div class="a" style="left:785px;top:185.5px;width:1px;height:284px;background:#cbcdd1"></div>
<div class="a" style="left:821px;top:185.5px;width:1px;height:284px;background:#cbcdd1"></div>
<div class="a" style="left:852px;top:185.5px;width:1px;height:284px;background:#cbcdd1"></div>
<div class="a" style="left:865px;top:185.5px;width:1px;height:284px;background:#cbcdd1"></div>
<svg style="left:1008.5px;top:194px;" width="8" height="7" viewBox="0 0 8 7"><path d="M0.3 6.3H7.3L3.8 0.5Z" fill="#5f6368"/></svg>
<div class="t" style="left:737.70px;top:6.34px;font-size:10px;color:#5f6368;letter-spacing:-0.400px;transform:scaleX(0.964);transform-origin:0 0;">Elements</div>
<div class="t" style="left:793.90px;top:6.34px;font-size:10px;color:#5f6368;letter-spacing:-0.400px;transform:scaleX(0.986);transform-origin:0 0;">Console</div>
<div class="t" style="left:846.40px;top:6.34px;font-size:10px;color:#333333;letter-spacing:-0.229px;">Network</div>
<div class="t" style="left:898.40px;top:4.30px;font-size:13px;color:#6f7378;">»</div>
<div class="t" style="left:936.90px;top:5.94px;font-size:10px;color:#202124;">2</div>
<div class="t" style="left:797.60px;top:27.64px;font-size:10px;color:#333333;letter-spacing:-0.400px;transform:scaleX(0.982);transform-origin:0 0;">Preserve log</div>
<div class="t" style="left:879.30px;top:27.64px;font-size:10px;color:#333333;letter-spacing:-0.400px;transform:scaleX(0.981);transform-origin:0 0;">Disable cache</div>
<div class="t" style="left:681.00px;top:48.03px;font-size:10px;color:#333333;letter-spacing:-0.093px;">No throttling</div>
<div class="t" style="left:679.70px;top:69.44px;font-size:10px;color:#6a6e73;letter-spacing:-0.400px;transform:scaleX(0.984);transform-origin:0 0;">Filter</div>
<div class="t" style="left:830.80px;top:69.03px;font-size:10px;color:#333333;letter-spacing:-0.400px;transform:scaleX(0.966);transform-origin:0 0;">Hide data URLs</div>
<div class="t" style="left:679.20px;top:88.63px;font-size:10px;color:#ffffff;letter-spacing:0.143px;">All</div>
<div class="t" style="left:701.20px;top:88.63px;font-size:10px;color:#333333;letter-spacing:-0.400px;transform:scaleX(0.965);transform-origin:0 0;">Fetch/XHR</div>
<div class="t" style="left:752.90px;top:88.63px;font-size:10px;color:#333333;letter-spacing:-0.400px;transform:scaleX(0.763);transform-origin:0 0;">JS</div>
<div class="t" style="left:770.00px;top:88.63px;font-size:10px;color:#333333;letter-spacing:-0.400px;transform:scaleX(0.789);transform-origin:0 0;">CSS</div>
<div class="t" style="left:794.00px;top:88.63px;font-size:10px;color:#333333;letter-spacing:-0.400px;">Img</div>
<div class="t" style="left:818.50px;top:88.63px;font-size:10px;color:#333333;letter-spacing:-0.400px;">Media</div>
<div class="t" style="left:852.50px;top:88.63px;font-size:10px;color:#333333;letter-spacing:-0.400px;transform:scaleX(0.984);transform-origin:0 0;">Font</div>
<div class="t" style="left:879.30px;top:88.63px;font-size:10px;color:#333333;letter-spacing:-0.400px;transform:scaleX(0.919);transform-origin:0 0;">Doc</div>
<div class="t" style="left:903.90px;top:88.63px;font-size:10px;color:#333333;letter-spacing:-0.400px;transform:scaleX(0.859);transform-origin:0 0;">WS</div>
<div class="t" style="left:925.80px;top:88.63px;font-size:10px;color:#333333;letter-spacing:-0.400px;transform:scaleX(0.927);transform-origin:0 0;">Wasm</div>
<div class="t" style="left:959.20px;top:88.63px;font-size:10px;color:#333333;letter-spacing:-0.299px;">Manifest</div>
<div class="t" style="left:1002.70px;top:88.63px;font-size:10px;color:#333333;letter-spacing:-0.177px;">Other</div>
<div class="t" style="left:695.00px;top:107.33px;font-size:10px;color:#333333;letter-spacing:-0.400px;">Has blocked cookies</div>
<div class="t" style="left:802.50px;top:107.33px;font-size:10px;color:#333333;letter-spacing:-0.400px;transform:scaleX(0.972);transform-origin:0 0;">Blocked Requests</div>
<div class="t" style="left:897.70px;top:107.33px;font-size:10px;color:#333333;letter-spacing:-0.226px;">3rd-party requests</div>
<div class="t" style="left:702.00px;top:125.63px;font-size:8px;color:#303134;letter-spacing:-0.400px;transform:scaleX(0.984);transform-origin:0 0;">10000 ms</div>
<div class="t" style="left:765.00px;top:125.63px;font-size:8px;color:#303134;letter-spacing:-0.400px;transform:scaleX(0.984);transform-origin:0 0;">20000 ms</div>
<div class="t" style="left:828.00px;top:125.63px;font-size:8px;color:#303134;letter-spacing:-0.400px;transform:scaleX(0.984);transform-origin:0 0;">30000 ms</div>
<div class="t" style="left:890.80px;top:125.63px;font-size:8px;color:#303134;letter-spacing:-0.400px;transform:scaleX(0.984);transform-origin:0 0;">40000 ms</div>
<div class="t" style="left:953.50px;top:125.63px;font-size:8px;color:#303134;letter-spacing:-0.400px;transform:scaleX(0.984);transform-origin:0 0;">50000 ms</div>
<div class="t" style="left:1015.00px;top:125.63px;font-size:8px;color:#303134;">60</div>
<div class="t" style="left:677.70px;top:192.44px;font-size:10px;color:#333333;letter-spacing:-0.400px;transform:scaleX(0.966);transform-origin:0 0;">Name</div>
<div class="t" style="left:747.50px;top:192.44px;font-size:10px;color:#333333;letter-spacing:-0.400px;transform:scaleX(0.869);transform-origin:0 0;">S...</div>
<div class="t" style="left:768.70px;top:192.44px;font-size:10px;color:#333333;letter-spacing:-0.400px;transform:scaleX(0.808);transform-origin:0 0;">T...</div>
<div class="t" style="left:789.70px;top:192.44px;font-size:10px;color:#333333;letter-spacing:-0.282px;">Initia...</div>
<div class="t" style="left:824.80px;top:192.44px;font-size:10px;color:#333333;letter-spacing:-0.400px;transform:scaleX(0.904);transform-origin:0 0;">Size</div>
<div class="t" style="left:856.40px;top:192.44px;font-size:10px;color:#333333;letter-spacing:-0.400px;transform:scaleX(0.895);transform-origin:0 0;">T.</div>
<div class="t" style="left:869.00px;top:192.44px;font-size:10px;color:#333333;letter-spacing:-0.298px;">Waterfall</div>
<div class="a" style="left:674px;top:207.5px;width:350px;height:262px;background:#fff"></div>
<div class="a" style="left:674px;top:208.0px;width:350px;height:16.5px;background:#f5f5f5"></div>
<div class="a" style="left:674px;top:224.5px;width:350px;height:16.5px;background:#ffffff"></div>
<div class="a" style="left:674px;top:241.0px;width:350px;height:16.5px;background:#f5f5f5"></div>
<div class="a" style="left:674px;top:257.5px;width:350px;height:16.5px;background:#ffffff"></div>
<div class="a" style="left:674px;top:274.0px;width:350px;height:16.5px;background:#f5f5f5"></div>
<div class="a" style="left:674px;top:290.5px;width:350px;height:16.5px;background:#ffffff"></div>

<div class="a" style="left:743px;top:207.5px;width:1px;height:262px;background:#d6d8db"></div>
<div class="a" style="left:765px;top:207.5px;width:1px;height:262px;background:#d6d8db"></div>
<div class="a" style="left:785px;top:207.5px;width:1px;height:262px;background:#d6d8db"></div>
<div class="a" style="left:821px;top:207.5px;width:1px;height:262px;background:#d6d8db"></div>
<div class="a" style="left:852px;top:207.5px;width:1px;height:262px;background:#d6d8db"></div>
<div class="a" style="left:865px;top:207.5px;width:1px;height:262px;background:#d6d8db"></div>
<div class="a" style="left:924px;top:207.5px;width:1px;height:262px;background:#e1e2e4"></div>
<div class="a" style="left:983px;top:207.5px;width:1px;height:262px;background:#e1e2e4"></div>
<div class="a" style="left:681px;top:212.0px;width:7.5px;height:9px;border:1px solid #80868b;background:#fff;border-radius:1px"></div>
<svg style="left:681px;top:228.0px;" width="8" height="9.5" viewBox="0 0 8 9.5"><rect x="0.5" y="0.5" width="7" height="8.5" fill="#eef3fb" stroke="#9aa8bc" stroke-width="0.8"/><path d="M1 4.6L3 3.2L4.6 4L7 2.8V8.9H1Z" fill="#b3cdf0"/></svg>
<div class="a" style="left:1022px;top:231.0px;width:2px;height:2px;background:#c4c7ca"></div>
<svg style="left:681px;top:244.5px;" width="8" height="9.5" viewBox="0 0 8 9.5"><rect x="0.5" y="0.5" width="7" height="8.5" fill="#eef3fb" stroke="#9aa8bc" stroke-width="0.8"/><path d="M1 4.6L3 3.2L4.6 4L7 2.8V8.9H1Z" fill="#b3cdf0"/></svg>
<div class="a" style="left:1022px;top:247.5px;width:2px;height:2px;background:#c4c7ca"></div>
<svg style="left:681px;top:261.0px;" width="8" height="9.5" viewBox="0 0 8 9.5"><rect x="0.5" y="0.5" width="7" height="8.5" fill="#eef3fb" stroke="#9aa8bc" stroke-width="0.8"/><path d="M1 4.6L3 3.2L4.6 4L7 2.8V8.9H1Z" fill="#b3cdf0"/></svg>
<div class="a" style="left:1022px;top:264.0px;width:2px;height:2px;background:#c4c7ca"></div>
<svg style="left:681px;top:277.5px;" width="8" height="9.5" viewBox="0 0 8 9.5"><rect x="0.5" y="0.5" width="7" height="8.5" fill="#eef3fb" stroke="#9aa8bc" stroke-width="0.8"/><path d="M1 4.6L3 3.2L4.6 4L7 2.8V8.9H1Z" fill="#b3cdf0"/></svg>
<div class="a" style="left:1022px;top:280.5px;width:2px;height:2px;background:#c4c7ca"></div>
<svg style="left:681px;top:294.0px;" width="8" height="9.5" viewBox="0 0 8 9.5"><rect x="0.5" y="0.5" width="7" height="8.5" fill="#eef3fb" stroke="#9aa8bc" stroke-width="0.8"/><path d="M1 4.6L3 3.2L4.6 4L7 2.8V8.9H1Z" fill="#b3cdf0"/></svg>
<div class="a" style="left:1022px;top:297.0px;width:2px;height:2px;background:#c4c7ca"></div>
<svg style="left:868px;top:210px;" width="12" height="11" viewBox="0 0 12 11"><rect x="1" y="3" width="0.8" height="4" fill="#b0b4b8"/><rect x="2.6" y="2.5" width="1" height="5" fill="#d08a5a"/><rect x="4.2" y="1" width="2.8" height="9.2" fill="#1aa260" rx="0.5"/><rect x="7" y="1.3" width="3" height="8.6" fill="#1a73e8"/></svg>
<div class="a" style="left:674px;top:469px;width:350px;height:1px;background:#cbcdd1"></div>
<div class="a" style="left:674px;top:470px;width:350px;height:21px;background:#f1f3f4"></div>
<div class="a" style="left:733px;top:473px;width:1px;height:12px;background:#cfd2d6"></div>
<div class="a" style="left:827px;top:473px;width:1px;height:12px;background:#cfd2d6"></div>
<div class="a" style="left:674px;top:491px;width:350px;height:1px;background:#cbcdd1"></div>
<div class="a" style="left:685.5px;top:498px;width:2.2px;height:2.2px;background:#5f6368;border-radius:50%"></div>
<div class="a" style="left:685.5px;top:502.5px;width:2.2px;height:2.2px;background:#5f6368;border-radius:50%"></div>
<div class="a" style="left:685.5px;top:507px;width:2.2px;height:2.2px;background:#5f6368;border-radius:50%"></div>
<svg style="left:807px;top:499px;" width="9" height="9" viewBox="0 0 9 9"><path d="M1.5 1.5L7 7M7 1.5L1.5 7" stroke="#333" stroke-width="1.3"/></svg>
<div class="a" style="left:745px;top:512px;width:73px;height:2px;background:#1a73e8"></div>
<svg style="left:1007px;top:498px;" width="10" height="10" viewBox="0 0 10 10"><path d="M1 1L8.5 8.5M8.5 1L1 8.5" stroke="#5f6368" stroke-width="1.2"/></svg>
<div class="a" style="left:674px;top:513.5px;width:350px;height:1px;background:#cbcdd1"></div>
<div class="a" style="left:674px;top:534px;width:350px;height:1px;background:#cbcdd1"></div>
<div class="a" style="left:674px;top:535px;width:350px;height:115px;background:#ffffff"></div>
<div class="a" style="left:688px;top:546.5px;width:254.5px;height:47px;border:1px solid #dadce0"></div>
<div class="a" style="left:688px;top:597.5px;width:254.5px;height:47px;border:1px solid #dadce0"></div>
<div class="a" style="left:688px;top:648px;width:254.5px;height:10px;border:1px solid #dadce0"></div>
<div class="a" style="left:980.3px;top:551px;width:30.5px;height:99px;background:#2d7ff0"></div>
<svg style="left:980.3px;top:551px;" width="30.5" height="99" viewBox="0 0 30.5 99"><defs><clipPath id="cl"><rect x="0" y="0" width="30.5" height="99"/></clipPath></defs><g clip-path="url(#cl)"><g stroke="#5e9ef6" stroke-width="0.7" fill="none"><path d="M0 1L30 35M0 92L30 58M15.4 0V99M27.7 0V99M0 13H30.5M0 22H30.5M0 46H30.5M0 80.5H30.5"/></g><g stroke="#b4d4fd" stroke-width="1.5" fill="none"><path d="M0 32L16.5 52"/><circle cx="40" cy="46" r="24"/><circle cx="40" cy="46" r="15"/></g></g></svg>
<div class="a" style="left:1011px;top:535px;width:13px;height:115px;background:#f1f1f1"></div>
<svg style="left:1013px;top:538px;" width="9" height="6" viewBox="0 0 9 6"><path d="M0.5 5.5H8.5L4.5 1Z" fill="#a3a3a3"/></svg>
<div class="a" style="left:1012.5px;top:549.2px;width:9px;height:25.6px;background:#c1c1c1"></div>
<svg style="left:1013px;top:640px;" width="9" height="6" viewBox="0 0 9 6"><path d="M0.5 0.5H8.5L4.5 5Z" fill="#505050"/></svg>
<div class="t" style="left:695.00px;top:212.53px;font-size:10px;color:#333333;letter-spacing:-0.170px;">profile.php</div>
<div class="t" style="left:747.50px;top:212.53px;font-size:10px;color:#333333;letter-spacing:-0.400px;transform:scaleX(0.929);transform-origin:0 0;">2...</div>
<div class="t" style="left:768.70px;top:212.53px;font-size:10px;color:#333333;letter-spacing:-0.400px;transform:scaleX(0.978);transform-origin:0 0;">t...</div>
<div class="t" style="left:789.70px;top:212.53px;font-size:10px;color:#333333;letter-spacing:-0.400px;text-decoration:underline;text-underline-offset:1px">insta...</div>
<div class="t" style="left:825.30px;top:212.53px;font-size:10px;color:#333333;letter-spacing:-0.400px;transform:scaleX(0.924);transform-origin:0 0;">14....</div>
<div class="t" style="left:856.40px;top:212.53px;font-size:10px;color:#333333;letter-spacing:-0.400px;transform:scaleX(0.814);transform-origin:0 0;">1..</div>
<div class="t" style="left:695.00px;top:229.03px;font-size:10px;color:#333333;letter-spacing:-0.400px;transform:scaleX(0.970);transform-origin:0 0;">?ai=Cp2...</div>
<div class="t" style="left:747.50px;top:229.03px;font-size:10px;color:#333333;letter-spacing:-0.400px;transform:scaleX(0.929);transform-origin:0 0;">2...</div>
<div class="t" style="left:768.70px;top:229.03px;font-size:10px;color:#333333;letter-spacing:-0.400px;transform:scaleX(0.978);transform-origin:0 0;">t...</div>
<div class="t" style="left:789.70px;top:229.03px;font-size:10px;color:#333333;letter-spacing:-0.384px;text-decoration:underline;text-underline-offset:1px">wind...</div>
<div class="t" style="left:830.50px;top:229.03px;font-size:10px;color:#333333;letter-spacing:-0.400px;transform:scaleX(0.945);transform-origin:0 0;">20 B</div>
<div class="t" style="left:856.40px;top:229.03px;font-size:10px;color:#333333;letter-spacing:-0.400px;transform:scaleX(0.814);transform-origin:0 0;">1..</div>
<div class="t" style="left:695.00px;top:245.53px;font-size:10px;color:#333333;letter-spacing:-0.400px;transform:scaleX(0.955);transform-origin:0 0;">?ai=C0m...</div>
<div class="t" style="left:747.50px;top:245.53px;font-size:10px;color:#333333;letter-spacing:-0.400px;transform:scaleX(0.929);transform-origin:0 0;">2...</div>
<div class="t" style="left:768.70px;top:245.53px;font-size:10px;color:#333333;letter-spacing:-0.400px;transform:scaleX(0.978);transform-origin:0 0;">t...</div>
<div class="t" style="left:789.70px;top:245.53px;font-size:10px;color:#333333;letter-spacing:-0.384px;text-decoration:underline;text-underline-offset:1px">wind...</div>
<div class="t" style="left:830.50px;top:245.53px;font-size:10px;color:#333333;letter-spacing:-0.400px;transform:scaleX(0.945);transform-origin:0 0;">20 B</div>
<div class="t" style="left:856.40px;top:245.53px;font-size:10px;color:#333333;letter-spacing:-0.400px;transform:scaleX(0.814);transform-origin:0 0;">1..</div>
<div class="t" style="left:695.00px;top:262.04px;font-size:10px;color:#333333;letter-spacing:-0.400px;transform:scaleX(0.966);transform-origin:0 0;">?ai=C9V...</div>
<div class="t" style="left:747.50px;top:262.04px;font-size:10px;color:#333333;letter-spacing:-0.400px;transform:scaleX(0.929);transform-origin:0 0;">2...</div>
<div class="t" style="left:768.70px;top:262.04px;font-size:10px;color:#333333;letter-spacing:-0.400px;transform:scaleX(0.978);transform-origin:0 0;">t...</div>
<div class="t" style="left:789.70px;top:262.04px;font-size:10px;color:#333333;letter-spacing:-0.384px;text-decoration:underline;text-underline-offset:1px">wind...</div>
<div class="t" style="left:830.50px;top:262.04px;font-size:10px;color:#333333;letter-spacing:-0.400px;transform:scaleX(0.945);transform-origin:0 0;">20 B</div>
<div class="t" style="left:856.40px;top:262.04px;font-size:10px;color:#333333;letter-spacing:-0.400px;transform:scaleX(0.814);transform-origin:0 0;">1..</div>
<div class="t" style="left:695.00px;top:278.54px;font-size:10px;color:#333333;letter-spacing:-0.400px;transform:scaleX(0.942);transform-origin:0 0;">?ai=CWK...</div>
<div class="t" style="left:747.50px;top:278.54px;font-size:10px;color:#333333;letter-spacing:-0.400px;transform:scaleX(0.929);transform-origin:0 0;">2...</div>
<div class="t" style="left:768.70px;top:278.54px;font-size:10px;color:#333333;letter-spacing:-0.400px;transform:scaleX(0.978);transform-origin:0 0;">t...</div>
<div class="t" style="left:789.70px;top:278.54px;font-size:10px;color:#333333;letter-spacing:-0.384px;text-decoration:underline;text-underline-offset:1px">wind...</div>
<div class="t" style="left:830.50px;top:278.54px;font-size:10px;color:#333333;letter-spacing:-0.400px;transform:scaleX(0.945);transform-origin:0 0;">20 B</div>
<div class="t" style="left:856.40px;top:278.54px;font-size:10px;color:#333333;letter-spacing:-0.400px;transform:scaleX(0.814);transform-origin:0 0;">1..</div>
<div class="t" style="left:695.00px;top:295.04px;font-size:10px;color:#333333;letter-spacing:-0.400px;transform:scaleX(0.962);transform-origin:0 0;">?ai=CDv...</div>
<div class="t" style="left:747.50px;top:295.04px;font-size:10px;color:#333333;letter-spacing:-0.400px;transform:scaleX(0.929);transform-origin:0 0;">2...</div>
<div class="t" style="left:768.70px;top:295.04px;font-size:10px;color:#333333;letter-spacing:-0.400px;transform:scaleX(0.978);transform-origin:0 0;">t...</div>
<div class="t" style="left:789.70px;top:295.04px;font-size:10px;color:#333333;letter-spacing:-0.384px;text-decoration:underline;text-underline-offset:1px">wind...</div>
<div class="t" style="left:830.50px;top:295.04px;font-size:10px;color:#333333;letter-spacing:-0.400px;transform:scaleX(0.945);transform-origin:0 0;">20 B</div>
<div class="t" style="left:856.40px;top:295.04px;font-size:10px;color:#333333;letter-spacing:-0.400px;transform:scaleX(0.814);transform-origin:0 0;">1..</div>
<div class="t" style="left:682.80px;top:476.74px;font-size:10px;color:#5f6368;letter-spacing:-0.400px;transform:scaleX(0.979);transform-origin:0 0;">6 requests</div>
<div class="t" style="left:741.30px;top:476.74px;font-size:10px;color:#5f6368;letter-spacing:-0.391px;">14.9 kB transferred</div>
<div class="t" style="left:834.70px;top:476.74px;font-size:10px;color:#5f6368;letter-spacing:-0.400px;transform:scaleX(0.975);transform-origin:0 0;">0 B resources</div>
<div class="t" style="left:703.40px;top:499.14px;font-size:10px;color:#5f6368;letter-spacing:-0.400px;transform:scaleX(0.986);transform-origin:0 0;">Console</div>
<div class="t" style="left:752.60px;top:499.14px;font-size:10px;color:#333333;letter-spacing:-0.315px;">What's New</div>
<div class="t" style="left:825.70px;top:499.14px;font-size:10px;color:#5f6368;letter-spacing:-0.128px;">Network conditions</div>
<div class="t" style="left:685.60px;top:520.33px;font-size:10px;color:#333333;letter-spacing:-0.188px;">Highlights from the Chrome 93 update</div>
<div class="t" style="left:695.50px;top:551.33px;font-size:10.6px;color:#1a73e8;letter-spacing:0.076px;">Lighthouse 8.1</div>
<div class="t" style="left:695.50px;top:567.74px;font-size:10px;color:#5f6368;letter-spacing:0.069px;">New `csp-xss` audit, performance score weighting</div>
<div class="t" style="left:695.50px;top:577.53px;font-size:10px;color:#5f6368;letter-spacing:-0.023px;">changes, and more.</div>
<div class="t" style="left:695.50px;top:601.83px;font-size:10.6px;color:#1a73e8;letter-spacing:0.145px;">Editable web container queries in the Styles pane</div>
<div class="t" style="left:695.50px;top:618.24px;font-size:10px;color:#5f6368;letter-spacing:0.079px;">View and edit web container queries in the Styles</div>
<div class="t" style="left:695.50px;top:628.24px;font-size:10px;color:#5f6368;letter-spacing:-0.131px;">pane.</div>
<svg style="left:0;top:0" width="1024" height="650" viewBox="0 0 1024 650"><defs><filter id="sh" x="-20%" y="-20%" width="140%" height="140%"><feGaussianBlur in="SourceAlpha" stdDeviation="1.6"/><feOffset dx="-0.5" dy="1.8"/><feComponentTransfer><feFuncA type="linear" slope="0.45"/></feComponentTransfer><feMerge><feMergeNode/><feMergeNode in="SourceGraphic"/></feMerge></filter></defs><g filter="url(#sh)" fill="#f9434a" stroke="#f9434a" stroke-width="0.6" stroke-linejoin="round"><path d="M341 20L366.6 24.4L362.6 30.9L394.50 54.25A3.9 3.9 0 0 1 389.90 60.55L358.1 37.5L353 42.9Z"/><path d="M707.1 17.6L726.8 34.7L719.5 37.6L729.73 64.40A3.8 3.8 0 0 1 722.67 67.20L712.3 41.1L704.6 43.6Z"/></g></svg>
</body></html>
